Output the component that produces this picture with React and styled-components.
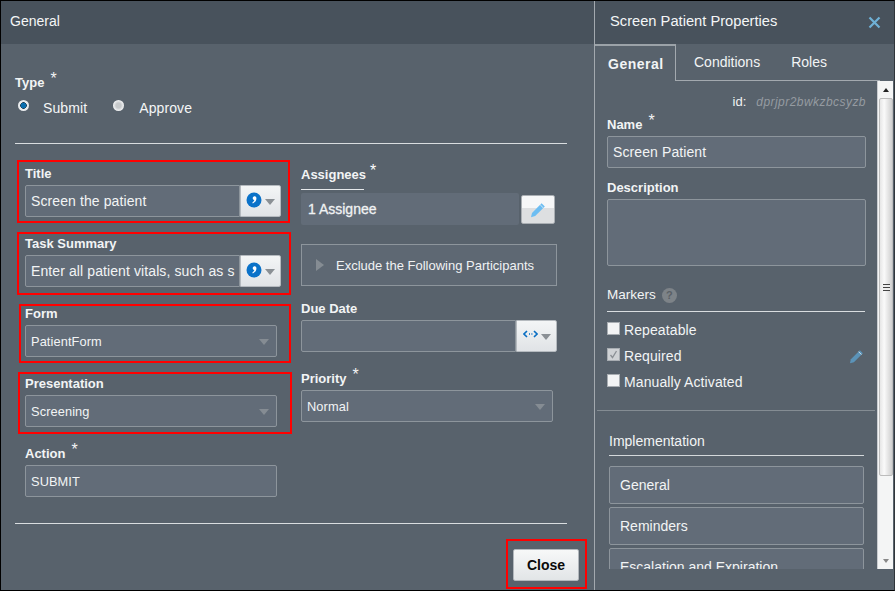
import React from "react";
import styled, { createGlobalStyle } from "styled-components";

const Global = createGlobalStyle`
  html, body { margin: 0; padding: 0; background: #58626c; }
  * { box-sizing: border-box; }
`;

const Shell = styled.div`
  width: 895px; height: 591px; overflow: hidden;
  display: flex;
  border: 1px solid #000;
  border-right-color: #30353a;
  background: #58626c;
  color: #fff;
  font-family: "Liberation Sans", Arial, sans-serif;
  font-size: 14px;
`;
const LeftPane = styled.section`
  width: 594px; flex: none;
  display: flex; flex-direction: column;
  border-right: 1px solid #a3a9af;
`;
const RightPane = styled.aside`
  flex: 1; min-width: 0;
  display: flex; flex-direction: column;
`;
const Header = styled.header`
  height: 43px; flex: none;
  display: flex; align-items: center; justify-content: space-between;
  background: #48525c;
  padding: 0 13px 3px ${p => p.$pad}px;
  font-size: ${p => p.$size}px;
  color: #f4f6f7;
`;
const LeftBody = styled.div`
  flex: 1; position: relative;
  padding: 31px 27px 0 14px;
  display: flex; flex-direction: column;
`;
const LabelText = styled.label`
  display: block;
  font-weight: bold; font-size: 13px; line-height: 15px; color: #f2f4f5;
`;
const Star = styled.span`
  font-weight: normal; font-size: 16px; line-height: 10px; margin-left: 6px;
  position: relative; top: -3px;
`;
const RadioRow = styled.div`
  display: flex; align-items: center; margin-top: 7px; height: 22px;
`;
const Radio = styled.span`
  width: 11px; height: 11px; border-radius: 50%; flex: none;
  margin: -5px ${p => p.$mr}px 0 ${p => p.$ml}px;
  background: ${p => p.$on
    ? "radial-gradient(circle, #0a6fb0 0 2.5px, #1b3e58 3px, #e9ecee 3.6px)"
    : "radial-gradient(circle, #c6c9cb 0 2.5px, #dfe1e3 4px, #f3f4f5 5.5px)"};
`;
const RadioText = styled.span`
  color: #f4f6f7; letter-spacing: .1px;
`;
const Rule = styled.hr`
  border: 0; height: 1px; margin: 0; background: #d9dde0; flex: none;
`;
const TypeRule = styled(Rule)`
  margin-top: 24px;
`;
const FormGrid = styled.div`
  display: grid; grid-template-columns: 276px 1fr;
  padding: 15px 0 0 10px; height: 379px;
`;
const Column = styled.div`
  display: flex; flex-direction: column;
`;
const Field = styled.div`
  position: relative; height: ${p => p.$h || 70}px;
  padding-top: ${p => p.$pt ?? 7}px;
`;
const RedBox = styled.div`
  position: absolute; border: 2px solid #f00; pointer-events: none;
  left: ${p => p.$l}px; top: ${p => p.$t}px; width: ${p => p.$w}px; height: ${p => p.$h}px;
`;
const Control = styled.div`
  height: 32px; margin-top: 4px; width: ${p => p.$w}px;
  display: flex; align-items: center;
  padding: 0 5px;
  background: #626c78;
  border: 1px solid #8d959c;
  border-radius: ${p => p.$flat ? "2px 0 0 2px" : "2px"};
  color: #f2f4f5;
  font-size: ${p => p.$size || 14}px;
  white-space: nowrap; overflow: hidden;
  position: relative;
  letter-spacing: .1px;
`;
const Combined = styled.div`
  display: flex; margin-top: 4px;
  ${Control} { margin-top: 0; }
`;
const ValueBtn = styled.div`
  width: ${p => p.$w}px; height: 32px; flex: none;
  display: flex; align-items: center; justify-content: center; gap: 3px;
  background: linear-gradient(#f3f5f6, #e0e3e6);
  border: 1px solid #b5babf; border-radius: 0 2px 2px 0;
`;
const Caret = styled.span`
  width: 0; height: 0; flex: none;
  border-left: 5px solid transparent; border-right: 5px solid transparent;
  border-top: 6px solid ${p => p.$c || "#8a9095"};
  margin-top: 2px;
`;
const SelectCaret = styled(Caret)`
  position: absolute; right: 7px; top: 13px; margin: 0; border-top-color: #858c93;
`;
const IconSvg = styled.svg`
  margin-top: ${p => p.$mt || 0}px; flex: none;
`;
const ComboIcon = () => (
  <IconSvg $mt={-3} width="16" height="16" viewBox="0 0 16 16">
    <circle cx="8" cy="8" r="7.5" fill="#0a72c9" />
    <path d="M8.2 4.2a2 2 0 0 1 2.2 2.2c0 2.3-1.5 4-3.6 5l-.5-.8c1.100-.7 1.800-1.500 2-2.500a2 2 0 0 1-.1-3.900z" fill="#fff" />
  </IconSvg>
);
const ArrowsIcon = () => (
  <IconSvg $mt={-4} width="15" height="8" viewBox="0 0 15 8">
    <path d="M4 1 1 4l3 3M11 1l3 3-3 3" fill="none" stroke="#0a6fc4" strokeWidth="1.6" />
    <path d="M6 4h1M8.400 4h1" stroke="#0a6fc4" strokeWidth="1.4" />
  </IconSvg>
);
const Pencil = ({ c = "#6cbdf2", s = 16 }) => (
  <svg width={s} height={s} viewBox="0 0 16 16">
    <path d="M11.600 1.200 14.800 4.400 5.200 14l-4.200 1.200L2 11z" fill={c} />
    <path d="M10.200 2.800 13.300 5.900" stroke="#f1f3f4" strokeWidth=".8" />
  </svg>
);
const UnderLabel = styled(LabelText)`
  display: inline-block; border-bottom: 1px solid #e6e9eb;
  height: 23px; width: 63px; white-space: nowrap;
`;
const AbsStar = styled(Star)`
  position: absolute; left: 63px; top: 7px;
`;
const AssigneeRow = styled.div`
  display: flex; align-items: flex-start; gap: 2px; margin-top: 3px;
`;
const AssigneeBox = styled.div`
  width: 218px; height: 32px; background: #626c78; border-radius: 2px;
  display: flex; align-items: center; padding-left: 7px;
  font-size: 14px; color: #f0f2f3;
  -webkit-text-stroke: .3px #f0f2f3;
`;
const EditBtn = styled.div`
  width: 34px; height: 29px; margin-top: 2px;
  display: flex; align-items: center; justify-content: center;
  background: linear-gradient(#f6f7f8 0 45%, #dddfe1 45% 100%);
  border: 1px solid #a9aeb3; border-radius: 2px;
`;
const Exclude = styled.div`
  width: 256px; height: 42px;
  display: flex; align-items: center; gap: 12px; padding-left: 14px;
  background: #5e6873; border: 1px solid #8d959c;
  font-size: 13px; color: #f0f2f3;
`;
const Tri = styled.span`
  width: 0; height: 0;
  border-top: 6px solid transparent; border-bottom: 6px solid transparent;
  border-left: 8px solid #858c93;
`;
const FooterBar = styled.div`
  flex: 1; display: flex; justify-content: flex-end; align-items: flex-start;
  padding: 25px 0 0 0; margin-right: -12px; position: relative;
`;
const CloseBtn = styled.button`
  width: 66px; height: 32px; padding: 0;
  border: 1px solid #b2b7bc; border-radius: 2px;
  background: linear-gradient(#f7f8f8, #e2e5e7);
  font: bold 14px "Liberation Sans", Arial, sans-serif; color: #0a0a0a;
`;
const Tabs = styled.nav`
  height: 37px; flex: none; display: flex;
  border-bottom: 1px solid #a3a9af; margin-right: 14px;
`;
const Tab = styled.div`
  height: ${p => p.$on ? 37 : 36}px;
  ${p => p.$on ? "width: 81px; padding-left: 13px;" : `margin-left: ${p.$ml}px;`}
  display: flex; align-items: center;
  font-weight: ${p => p.$on ? "bold" : "normal"};
  font-size: 14px; color: #f2f4f5;
  background: ${p => p.$on ? "#58626c" : "transparent"};
  border-top: ${p => p.$on ? "2px solid #9ba2a8" : "0"};
  border-right: ${p => p.$on ? "1px solid #a3a9af" : "0"};
  letter-spacing: ${p => p.$on ? ".5px" : "0"};
`;
const ScrollWrap = styled.div`
  height: 488px; flex: none; display: flex;
`;
const ScrollContent = styled.div`
  width: 283px; flex: none; overflow: hidden; padding: 0 12px;
  border-right: 1px solid #c9ccd0;
`;
const IdRow = styled.div`
  display: flex; justify-content: flex-end; gap: 10px; align-items: baseline;
  padding-top: 13px; height: 36px; font-size: 13px; color: #f0f2f3;
  margin-right: -1px;
`;
const IdValue = styled.span`
  font-style: italic; font-size: 12px; color: #959ba1; letter-spacing: .45px;
`;
const PropField = styled.div`
  display: flex; flex-direction: column;
  margin-bottom: ${p => p.$mb}px;
`;
const PropInput = styled(Control)`
  width: 259px;
`;
const PropArea = styled.div`
  width: 259px; height: 67px; margin-top: 4px;
  background: #626c78; border: 1px solid #8d959c; border-radius: 2px;
`;
const SectionHead = styled.div`
  display: flex; align-items: center; gap: 6px;
  height: 18px; font-size: 13.5px; color: #f2f4f5;
`;
const Help = styled.span`
  width: 15px; height: 15px; border-radius: 50%; background: #7d8388;
  display: flex; align-items: center; justify-content: center;
  font: bold 11px "Liberation Sans", Arial, sans-serif; color: #5a6066;
  margin-top: 2px;
`;
const MarkerRule = styled(Rule)`
  margin-top: 8px;
`;
const CheckList = styled.div`
  display: flex; flex-direction: column; margin-top: 5px;
`;
const CheckRow = styled.div`
  height: 26px; display: flex; align-items: center; gap: 4px;
  font-size: 14px; color: #f2f4f5; letter-spacing: .1px;
`;
const Check = styled.span`
  width: 13px; height: 13px; flex: none; margin-top: -3px;
  background: ${p => p.$on ? "#cfd2d5" : "#f3f4f5"};
  border: 1px solid #a8adb2;
  display: flex; align-items: center; justify-content: center;
`;
const RowPencil = styled.span`
  margin-left: auto; margin-right: 1px; display: flex;
`;
const SectionDivider = styled.div`
  height: 1px; background: #848c93; margin: 15px -10px 22px;
`;
const ImplRule = styled(Rule)`
  margin: 5px 1px 10px 2px; background: #d4d8db;
`;
const ImplHead = styled.div`
  font-size: 14px; margin-left: 2px; height: 17px; color: #f2f4f5;
`;
const ImplList = styled.div`
  display: flex; flex-direction: column; gap: 3px; margin: 0 1px 0 2px;
`;
const ImplBtn = styled.div`
  height: 38px; flex: none; display: flex; align-items: center; padding-left: 10px;
  background: #626c78; border: 1px solid #8d959c; border-radius: 2px;
  font-size: 14px; color: #f2f4f5;
`;
const Scrollbar = styled.div`
  width: 15px; flex: none; background: #f4f5f5;
  display: flex; flex-direction: column; align-items: center;
`;
const ScrollArrow = styled.span`
  height: 17px; flex: none; display: flex; align-items: center; justify-content: center;
  width: 100%;
  ${p => !p.$up && "margin-top: auto;"}
  &::after {
    content: ""; width: 0; height: 0;
    border-left: 3.5px solid transparent; border-right: 3.5px solid transparent;
    ${p => p.$up ? "border-bottom: 4px solid #222;" : "border-top: 4px solid #888;"}
  }
`;
const Thumb = styled.div`
  width: 14px; height: 378px; margin-left: 1px;
  background: linear-gradient(90deg, #e6e6e6, #fafafa 35%, #cfcfcf);
  border: 1px solid #bcbcbc; border-radius: 2px;
  display: flex; align-items: center; justify-content: center;
`;
const Grip = styled.span`
  width: 7px; height: 7px;
  background: repeating-linear-gradient(#444 0 1px, #eee 1px 3px);
`;

const LabelWithStar = ({ children }) => (
  <LabelText>{children}<Star>*</Star></LabelText>
);

export default function App() {
  return (
    <Shell>
      <Global />
      <LeftPane>
        <Header $pad={9} $size={14}>General</Header>
        <LeftBody>
          <LabelWithStar>Type</LabelWithStar>
          <RadioRow>
            <Radio $on $ml={3} $mr={14} /><RadioText>Submit</RadioText>
            <Radio $ml={26} $mr={15} /><RadioText>Approve</RadioText>
          </RadioRow>
          <TypeRule />
          <FormGrid>
            <Column>
              <Field>
                <RedBox $l={-8} $t={1} $w={273} $h={63} />
                <LabelText>Title</LabelText>
                <Combined>
                  <Control $w={215} $flat>Screen the patient</Control>
                  <ValueBtn $w={41}><ComboIcon /><Caret /></ValueBtn>
                </Combined>
              </Field>
              <Field>
                <RedBox $l={-8} $t={3} $w={274} $h={63} />
                <LabelText>Task Summary</LabelText>
                <Combined>
                  <Control $w={215} $flat>Enter all patient vitals, such as s</Control>
                  <ValueBtn $w={41}><ComboIcon /><Caret /></ValueBtn>
                </Combined>
              </Field>
              <Field>
                <RedBox $l={-6} $t={5} $w={272} $h={59} />
                <LabelText>Form</LabelText>
                <Control $w={252} $size={12.8}>PatientForm<SelectCaret /></Control>
              </Field>
              <Field>
                <RedBox $l={-7} $t={3} $w={274} $h={62} />
                <LabelText>Presentation</LabelText>
                <Control $w={252} $size={12.8}>Screening<SelectCaret /></Control>
              </Field>
              <Field>
                <LabelWithStar>Action</LabelWithStar>
                <Control $w={252} $size={12.8}>SUBMIT</Control>
              </Field>
            </Column>
            <Column>
              <Field $h={85}>
                <UnderLabel>Assignees</UnderLabel>
                <AbsStar>*</AbsStar>
                <AssigneeRow>
                  <AssigneeBox>1 Assignee</AssigneeBox>
                  <EditBtn><Pencil /></EditBtn>
                </AssigneeRow>
              </Field>
              <Field $h={50} $pt={0}>
                <Exclude><Tri />Exclude the Following Participants</Exclude>
              </Field>
              <Field>
                <LabelText>Due Date</LabelText>
                <Combined>
                  <Control $w={215} $flat />
                  <ValueBtn $w={41}><ArrowsIcon /><Caret /></ValueBtn>
                </Combined>
              </Field>
              <Field>
                <LabelWithStar>Priority</LabelWithStar>
                <Control $w={252} $size={12.8}>Normal<SelectCaret /></Control>
              </Field>
            </Column>
          </FormGrid>
          <Rule />
          <FooterBar>
            <RedBox $l={491} $t={15} $w={81} $h={50} />
            <CloseBtn>Close</CloseBtn>
          </FooterBar>
        </LeftBody>
      </LeftPane>
      <RightPane>
        <Header $pad={15} $size={14.7}>
          Screen Patient Properties
          <IconSvg $mt={2} width="13" height="13" viewBox="0 0 13 13">
            <path d="M1.500 1.500l10 10M11.500 1.500l-10 10" stroke="#6fb1d6" strokeWidth="2.2" />
          </IconSvg>
        </Header>
        <Tabs>
          <Tab $on>General</Tab>
          <Tab $ml={18}>Conditions</Tab>
          <Tab $ml={31}>Roles</Tab>
        </Tabs>
        <ScrollWrap>
          <ScrollContent>
            <IdRow>id: <IdValue>dprjpr2bwkzbcsyzb</IdValue></IdRow>
            <PropField $mb={12}>
              <LabelWithStar>Name</LabelWithStar>
              <PropInput>Screen Patient</PropInput>
            </PropField>
            <PropField $mb={19}>
              <LabelText>Description</LabelText>
              <PropArea />
            </PropField>
            <SectionHead>Markers<Help>?</Help></SectionHead>
            <MarkerRule />
            <CheckList>
              <CheckRow><Check />Repeatable</CheckRow>
              <CheckRow>
                <Check $on>
                  <svg width="9" height="9" viewBox="0 0 9 9"><path d="M1.500 5l2 2.500L7.500 1" fill="none" stroke="#8b9095" strokeWidth="1.3" /></svg>
                </Check>
                Required
                <RowPencil><Pencil c="#5b93b8" s={15} /></RowPencil>
              </CheckRow>
              <CheckRow><Check />Manually Activated</CheckRow>
            </CheckList>
            <SectionDivider />
            <ImplHead>Implementation</ImplHead>
            <ImplRule />
            <ImplList>
              <ImplBtn>General</ImplBtn>
              <ImplBtn>Reminders</ImplBtn>
              <ImplBtn>Escalation and Expiration</ImplBtn>
            </ImplList>
          </ScrollContent>
          <Scrollbar>
            <ScrollArrow $up />
            <Thumb><Grip /></Thumb>
            <ScrollArrow />
          </Scrollbar>
        </ScrollWrap>
      </RightPane>
    </Shell>
  );
}
